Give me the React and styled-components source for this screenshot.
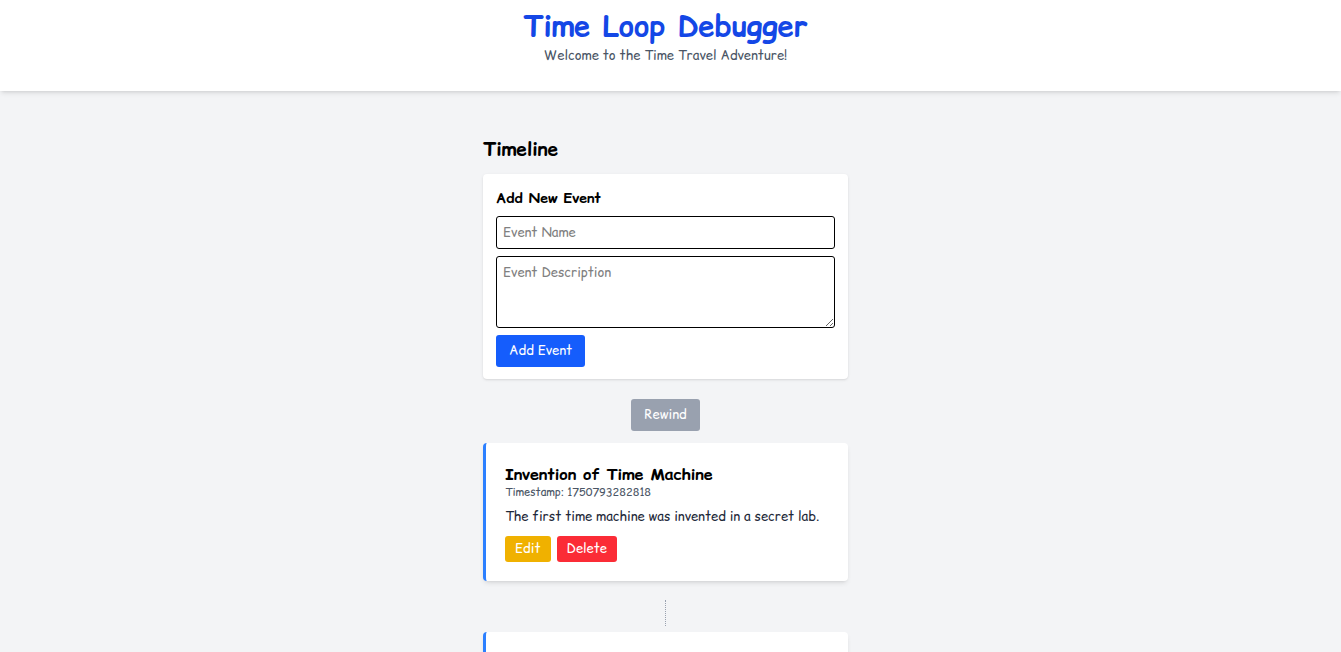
import React, { useState } from "react";
import styled, { createGlobalStyle } from "styled-components";

const GlobalStyle = createGlobalStyle`
  *, *::before, *::after { box-sizing: border-box; }
  body {
    margin: 0;
    background: #f3f4f6;
    color: #000;
    font-family: "Comic Sans MS", "Comic Relief", "Comic Neue", "Open Sans", sans-serif;
    font-size: 13px;
    line-height: 20px;
  }
  h1, h2, h3, p { margin: 0; }
  button, input, textarea { font: inherit; }
`;

const Page = styled.div`
  height: 100vh;
  overflow: hidden;
`;

const Header = styled.header`
  padding: 7px 10px 26px 0;
  background: #fff;
  text-align: center;
  box-shadow: 0 3px 5px -1px rgba(0, 0, 0, 0.1), 0 2px 3px -2px rgba(0, 0, 0, 0.1);
`;

const Title = styled.h1`
  color: #1447e6;
  font-size: 29px;
  font-weight: 700;
  line-height: 38px;
`;

const Subtitle = styled.p`
  color: #4a5565;
`;

const Main = styled.main`
  display: flex;
  justify-content: center;
  padding: 46px 10px 0 0;
`;

const Column = styled.div`
  width: 100%;
  max-width: 365px;
`;

const SectionTitle = styled.h2`
  margin-bottom: 13px;
  font-size: 19px;
  font-weight: 700;
  line-height: 24px;
`;

const EventForm = styled.form`
  display: flex;
  flex-direction: column;
  align-items: flex-start;
  gap: 7px;
  padding: 13px 13px 12px;
  border-radius: 4px;
  background: #fff;
  box-shadow: 0 1px 3px rgba(0, 0, 0, 0.1), 0 1px 2px -1px rgba(0, 0, 0, 0.1);
`;

const Heading = styled.h3`
  font-size: ${(p) => (p.$large ? "16px" : "14px")};
  font-weight: 700;
  line-height: 22px;
`;

const Field = styled.input`
  display: block;
  width: 100%;
  height: ${(p) => (p.$tall ? "72px" : "33px")};
  padding: ${(p) => (p.$tall ? "5px 6px" : "4px 6px 6px")};
  border: 1px solid #000;
  border-radius: 3px;
  background: #fff;
  color: #000;
  &::placeholder { color: #808080; opacity: 1; }
`;

const Button = styled.button`
  padding: ${(p) => (p.$small ? "2px 10px 4px" : "5px 13px 7px")};
  border: 0;
  border-radius: 3px;
  background: ${(p) => p.$color};
  color: #fff;
  cursor: pointer;
`;

const RewindRow = styled.div`
  display: flex;
  justify-content: center;
  padding: 20px 0 12px;
`;

const Card = styled.article`
  min-height: 138px;
  padding: 20px 19px 19px;
  border-left: 3px solid #2b7fff;
  border-radius: 4px;
  background: #fff;
  box-shadow: 0 3px 5px -1px rgba(0, 0, 0, 0.1), 0 2px 3px -2px rgba(0, 0, 0, 0.1);
`;

const Timestamp = styled.p`
  margin-bottom: 7px;
  color: #4a5565;
  font-size: 11px;
  line-height: 14px;
`;

const Description = styled.p`
  color: #1e2939;
`;

const Actions = styled.div`
  display: flex;
  gap: 6px;
  margin-top: 10px;
`;

const Connector = styled.div`
  width: 1px;
  height: 26px;
  margin: 19px auto 6px;
  border-left: 1px dotted #99a1af;
`;

export default function App() {
  const [name, setName] = useState("");
  const [description, setDescription] = useState("");

  return (
    <>
      <GlobalStyle />
      <Page>
        <Header>
          <Title>Time Loop Debugger</Title>
          <Subtitle>Welcome to the Time Travel Adventure!</Subtitle>
        </Header>
        <Main>
          <Column>
            <SectionTitle>Timeline</SectionTitle>
            <EventForm onSubmit={(e) => e.preventDefault()}>
              <Heading>Add New Event</Heading>
              <Field
                type="text"
                aria-label="Event Name"
                placeholder="Event Name"
                value={name}
                onChange={(e) => setName(e.target.value)}
              />
              <Field
                as="textarea"
                $tall
                aria-label="Event Description"
                placeholder="Event Description"
                value={description}
                onChange={(e) => setDescription(e.target.value)}
              />
              <Button type="submit" $color="#155dfc">Add Event</Button>
            </EventForm>
            <RewindRow>
              <Button type="button" $color="#99a1af">Rewind</Button>
            </RewindRow>
            <Card>
              <Heading $large>Invention of Time Machine</Heading>
              <Timestamp>Timestamp: 1750793282818</Timestamp>
              <Description>The first time machine was invented in a secret lab.</Description>
              <Actions>
                <Button type="button" $small $color="#f0b100">Edit</Button>
                <Button type="button" $small $color="#fb2c36">Delete</Button>
              </Actions>
            </Card>
            <Connector />
            <Card />
          </Column>
        </Main>
      </Page>
    </>
  );
}
